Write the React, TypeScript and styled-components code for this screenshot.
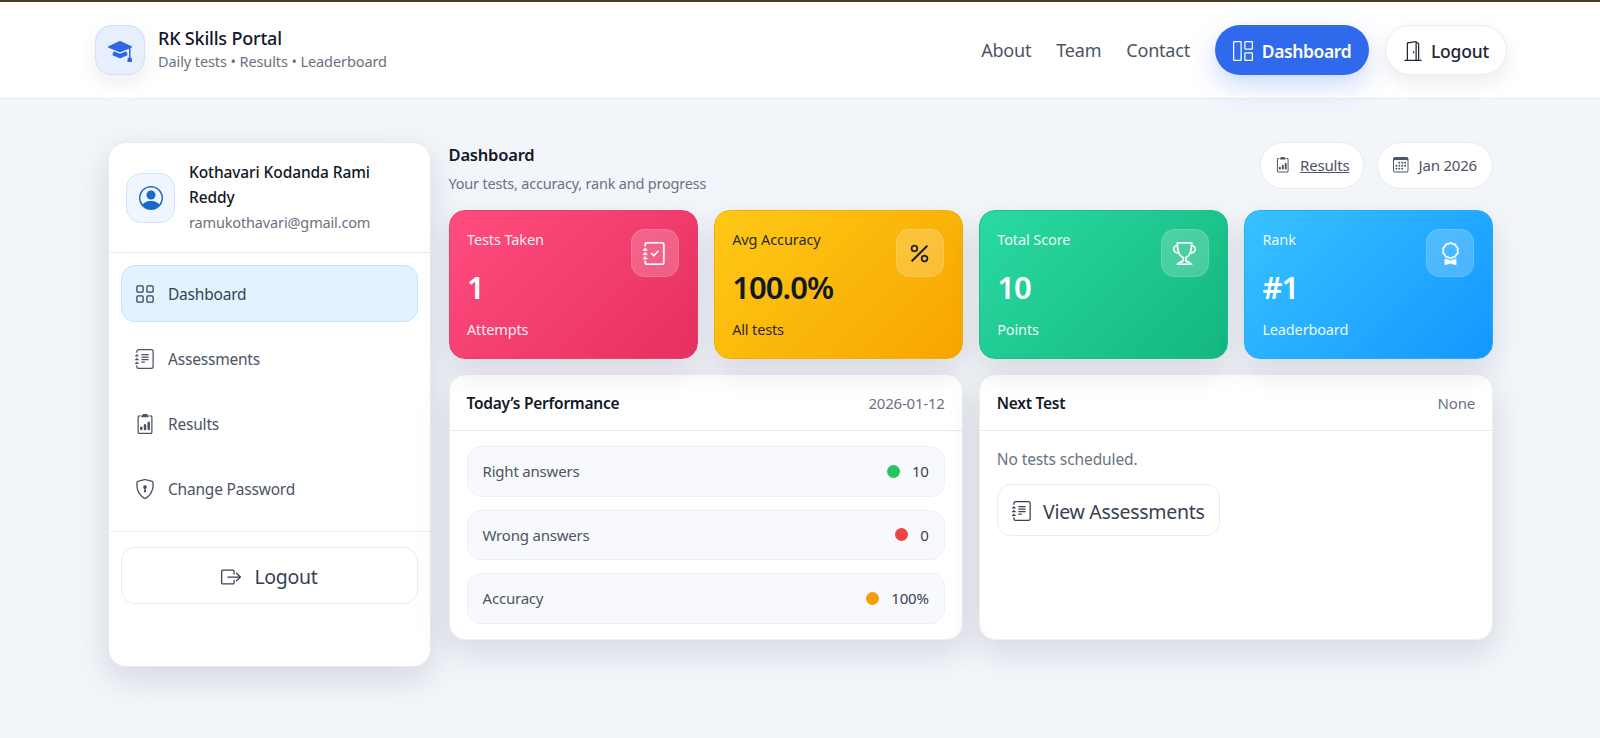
import React from "react";
import styled, { createGlobalStyle } from "styled-components";
import {
  BsMortarboardFill, BsGrid1X2, BsDoorOpen, BsGrid, BsJournalText, BsClipboard2Data,
  BsShieldLock, BsBoxArrowRight, BsJournalCheck, BsPercent, BsTrophy, BsAward, BsCalendar3, BsPersonCircle,
} from "react-icons/bs";

const Global = createGlobalStyle`
  * { box-sizing: border-box; }
  html, body { margin: 0; padding: 0; height: 100%; overflow: hidden; }
  body { background: #f2f5fa; font-family: "Noto Sans", "Open Sans", sans-serif; color: #111827; }
`;

const Page = styled.div`min-height: 738px; display: flex; flex-direction: column;`;
const TopStrip = styled.div`height: 2px; background: #4a3b2a;`;
const Header = styled.header`
  height: 97px; background: #fff; border-bottom: 1px solid #e8ebf0;
  padding: 0 93px 0 95px; display: flex; align-items: center; justify-content: space-between;
`;
const Brand = styled.div`display: flex; align-items: center; gap: 13px;`;
const BrandIcon = styled.div`
  width: 50px; height: 50px; border-radius: 16px; background: #e8effc; border: 1px solid #d3dff9;
  display: grid; place-items: center; color: #2f66e8; font-size: 24px;
  box-shadow: 0 8px 20px rgba(17, 24, 39, .07);
`;
const BrandName = styled.div`font-size: 18px; font-weight: 500; line-height: 23px; letter-spacing: -.2px; color: #111827;`;
const BrandSub = styled.div`font-size: 14.5px; line-height: 23px; color: #6b7280; letter-spacing: -.1px;`;
const Nav = styled.nav`display: flex; align-items: center;`;
const NavLink = styled.a`font-size: 18px; color: #4b5563; margin-right: 25px; letter-spacing: -.2px;`;
const PrimaryPill = styled.a`
  height: 50px; width: 154px; border-radius: 25px; background: #2f69ec; color: #fff;
  display: flex; align-items: center; justify-content: center; gap: 9px;
  font-size: 17.5px; font-weight: 600; letter-spacing: -.4px; margin-right: 16px; padding-top: 1px;
  box-shadow: 0 10px 26px rgba(47, 105, 236, .25);
  svg { font-size: 20px; }
`;
const LogoutPill = styled.a`
  height: 50px; width: 122px; border-radius: 25px; background: #fff; border: 1px solid #e8ebf0; color: #1f2937;
  display: flex; align-items: center; justify-content: center; gap: 8px; padding-top: 1px;
  font-size: 17.5px; font-weight: 500; letter-spacing: -.2px;
  box-shadow: 0 8px 20px rgba(17, 24, 39, .08);
  svg { font-size: 20px; }
`;
const Body = styled.div`
  padding: 43px 107px 0 108px; display: grid; grid-template-columns: 323px 1fr; column-gap: 17.5px; align-items: start;
`;
const Sidebar = styled.aside`
  height: 525px; background: #fff; border: 1px solid #e8ebf0; border-radius: 18px;
  box-shadow: 0 12px 34px rgba(17, 24, 39, .13); display: flex; flex-direction: column;
`;
const Profile = styled.div`
  height: 110px; border-bottom: 1px solid #e8ebf0; padding: 0 17px; display: flex; align-items: center; gap: 14px;
`;
const Avatar = styled.div`
  flex: none; width: 49px; height: 50px; border-radius: 15px; background: #eff6ff; border: 1px solid #cfe5fc;
  display: grid; place-items: center; color: #1769c9; font-size: 24px;
`;
const ProfileName = styled.div`font-size: 15.5px; font-weight: 500; line-height: 25px; letter-spacing: -.1px; color: #111827;`;
const ProfileMail = styled.div`font-size: 14.5px; line-height: 25px; color: #6b7280; letter-spacing: -.15px;`;
const SideNav = styled.div`padding: 12px 12px 0; display: flex; flex-direction: column; gap: 8px; height: 279px; border-bottom: 1px solid #eef0f4;`;
const SideItem = styled.a<{ $active?: boolean }>`
  height: 57px; border-radius: 14px; display: flex; align-items: center; gap: 13px; padding: 0 13px;
  font-size: 15.5px; letter-spacing: -.2px;
  color: ${(p) => (p.$active ? "#374151" : "#4b5563")};
  background: ${(p) => (p.$active ? "#e0f3fe" : "transparent")};
  border: 1px solid ${(p) => (p.$active ? "#bfe6fb" : "transparent")};
  svg { font-size: 20px; flex: none; }
`;
const SideFoot = styled.div`padding: 15px 12px;`;
const SideLogout = styled.a`
  height: 57px; border: 1px solid #e8ebf0; border-radius: 14px; display: flex; align-items: center; justify-content: center; gap: 13px;
  font-size: 19.5px; color: #374151; letter-spacing: -.3px; padding-top: 2px;
  svg { font-size: 20px; }
`;
const Main = styled.main`display: flex; flex-direction: column; min-width: 0;`;
const TitleRow = styled.div`height: 46px; display: flex; justify-content: space-between; align-items: flex-start;`;
const Title = styled.div`font-size: 16.5px; font-weight: 600; line-height: 28px; margin-top: -1px; letter-spacing: -.2px; color: #111827;`;
const Subtitle = styled.div`font-size: 14.5px; line-height: 28px; color: #6b7280; letter-spacing: -.2px;`;
const Pills = styled.div`display: flex; gap: 13px;`;
const Pill = styled.a<{ $w: number; $link?: boolean }>`
  height: 47px; width: ${(p) => p.$w}px; background: #fff; border: 1px solid #e8ebf0; border-radius: 24px;
  display: flex; align-items: center; justify-content: center; gap: 10px; padding-bottom: 1px;
  font-size: 15px; color: #4b5563; letter-spacing: -.2px;
  span { text-decoration: ${(p) => (p.$link ? "underline" : "none")}; }
  svg { font-size: 15.5px; }
`;
const Stats = styled.div`margin-top: 22px; display: grid; grid-template-columns: repeat(4, 1fr); gap: 16px;`;
const Stat = styled.div<{ $bg: string; $dark?: boolean; $line: string }>`
  height: 149px; border-radius: 16px; padding: 17px 18px 18px 17.5px; position: relative; background: ${(p) => p.$bg};
  border: 1px solid ${(p) => p.$line};
  color: ${(p) => (p.$dark ? "#111827" : "#fff")};
  box-shadow: 0 12px 30px rgba(17, 24, 39, .12);
  display: flex; flex-direction: column;
`;
const StatLabel = styled.div`font-size: 14.5px; line-height: 22px; opacity: .9; letter-spacing: -.1px;`;
const StatValue = styled.div`font-size: 31px; font-weight: 600; line-height: 44px; margin-top: 15px; letter-spacing: -.9px;`;
const StatSub = styled.div`font-size: 14.5px; line-height: 22px; margin-top: 9px; opacity: .9; letter-spacing: -.15px;`;
const StatIcon = styled.div`
  position: absolute; right: 18px; top: 18px; width: 48px; height: 48px; border-radius: 14px;
  background: rgba(255, 255, 255, .2); border: 1px solid rgba(255, 255, 255, .14);
  display: grid; place-items: center; font-size: 23px;
  svg { stroke: currentColor; stroke-width: .2; }
`;
const Panels = styled.div`margin-top: 15px; display: grid; grid-template-columns: 1fr 1fr; gap: 16px;`;
const Panel = styled.section`
  height: 266px; background: #fff; border: 1px solid #eceef2; border-radius: 16px;
  box-shadow: 0 12px 34px rgba(17, 24, 39, .13); overflow: hidden;
`;
const PanelHead = styled.div`
  height: 56px; padding: 0 17px; border-bottom: 1px solid #e8ebf0; display: flex; align-items: center; justify-content: space-between;
`;
const PanelTitle = styled.div`font-size: 15.5px; font-weight: 600; letter-spacing: -.25px; color: #111827;`;
const PanelMeta = styled.div`font-size: 15px; color: #6b7280; letter-spacing: -.2px;`;
const PanelBody = styled.div`padding: 15px 17px; display: flex; flex-direction: column; gap: 13px;`;
const Row = styled.div`
  height: 50.5px; background: #f8f9fc; border: 1px solid #eceff4; border-radius: 14px; padding: 0 15px;
  display: flex; align-items: center; justify-content: space-between;
  font-size: 15px; color: #4b5563; letter-spacing: -.2px;
`;
const RowValue = styled.div`display: flex; align-items: center; gap: 12px; color: #374151;`;
const Dot = styled.i<{ $c: string }>`width: 13px; height: 13px; border-radius: 50%; background: ${(p) => p.$c};`;
const Empty = styled.div`font-size: 15.5px; line-height: 24px; color: #6b7280; letter-spacing: -.1px; margin-top: 1px;`;
const ViewBtn = styled.a`
  height: 52px; width: 223px; border: 1px solid #e8ebf0; border-radius: 14px;
  display: flex; align-items: center; justify-content: center; gap: 11px; padding-top: 2px;
  font-size: 19.5px; color: #374151; letter-spacing: -.3px;
  svg { font-size: 20px; }
`;

const stats = [
  { label: "Tests Taken", value: "1", sub: "Attempts", icon: <BsJournalCheck />, bg: "linear-gradient(135deg,#ff4d7e,#e6305f)", line: "#e4416f" },
  { label: "Avg Accuracy", value: "100.0%", sub: "All tests", icon: <BsPercent />, bg: "linear-gradient(135deg,#ffc916,#f7a500)", line: "#f0b000", dark: true },
  { label: "Total Score", value: "10", sub: "Points", icon: <BsTrophy />, bg: "linear-gradient(135deg,#2bd9a2,#14b77f)", line: "#1fbd8a" },
  { label: "Rank", value: "#1", sub: "Leaderboard", icon: <BsAward />, bg: "linear-gradient(135deg,#38c2ff,#1497ff)", line: "#2aa8f5" },
];

export default function App() {
  return (
    <Page>
      <Global />
      <TopStrip />
      <Header>
        <Brand>
          <BrandIcon><BsMortarboardFill /></BrandIcon>
          <div>
            <BrandName>RK Skills Portal</BrandName>
            <BrandSub>Daily tests • Results • Leaderboard</BrandSub>
          </div>
        </Brand>
        <Nav>
          <NavLink>About</NavLink>
          <NavLink>Team</NavLink>
          <NavLink>Contact</NavLink>
          <PrimaryPill><BsGrid1X2 />Dashboard</PrimaryPill>
          <LogoutPill><BsDoorOpen />Logout</LogoutPill>
        </Nav>
      </Header>
      <Body>
        <Sidebar>
          <Profile>
            <Avatar><BsPersonCircle /></Avatar>
            <div>
              <ProfileName>Kothavari Kodanda Rami Reddy</ProfileName>
              <ProfileMail>ramukothavari@gmail.com</ProfileMail>
            </div>
          </Profile>
          <SideNav>
            <SideItem $active><BsGrid />Dashboard</SideItem>
            <SideItem><BsJournalText />Assessments</SideItem>
            <SideItem><BsClipboard2Data />Results</SideItem>
            <SideItem><BsShieldLock />Change Password</SideItem>
          </SideNav>
          <SideFoot>
            <SideLogout><BsBoxArrowRight />Logout</SideLogout>
          </SideFoot>
        </Sidebar>
        <Main>
          <TitleRow>
            <div>
              <Title>Dashboard</Title>
              <Subtitle>Your tests, accuracy, rank and progress</Subtitle>
            </div>
            <Pills>
              <Pill $w={104} $link><BsClipboard2Data /><span>Results</span></Pill>
              <Pill $w={116}><BsCalendar3 /><span>Jan 2026</span></Pill>
            </Pills>
          </TitleRow>
          <Stats>
            {stats.map((s) => (
              <Stat key={s.label} $bg={s.bg} $dark={s.dark} $line={s.line}>
                <StatLabel>{s.label}</StatLabel>
                <StatValue>{s.value}</StatValue>
                <StatSub>{s.sub}</StatSub>
                <StatIcon>{s.icon}</StatIcon>
              </Stat>
            ))}
          </Stats>
          <Panels>
            <Panel>
              <PanelHead><PanelTitle>Today’s Performance</PanelTitle><PanelMeta>2026-01-12</PanelMeta></PanelHead>
              <PanelBody>
                <Row>Right answers<RowValue><Dot $c="#22c55e" />10</RowValue></Row>
                <Row>Wrong answers<RowValue><Dot $c="#ef4444" />0</RowValue></Row>
                <Row>Accuracy<RowValue><Dot $c="#f59e0b" />100%</RowValue></Row>
              </PanelBody>
            </Panel>
            <Panel>
              <PanelHead><PanelTitle>Next Test</PanelTitle><PanelMeta>None</PanelMeta></PanelHead>
              <PanelBody>
                <Empty>No tests scheduled.</Empty>
                <ViewBtn><BsJournalText />View Assessments</ViewBtn>
              </PanelBody>
            </Panel>
          </Panels>
        </Main>
      </Body>
    </Page>
  );
}
